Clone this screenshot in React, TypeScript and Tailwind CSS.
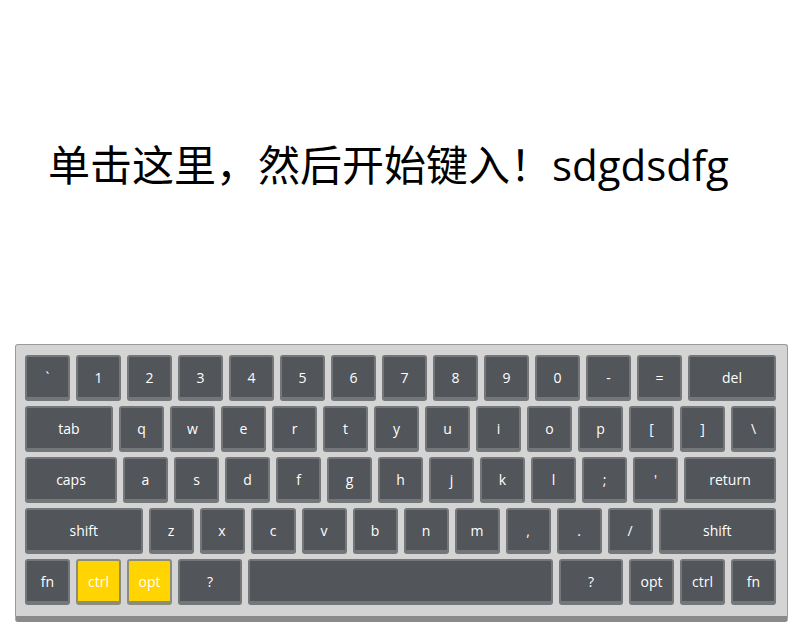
import React from "react";

type K = { l: string; w?: string; y?: boolean };

const rows: K[][] = [
  [
    { l: "`" }, { l: "1" }, { l: "2" }, { l: "3" }, { l: "4" }, { l: "5" }, { l: "6" },
    { l: "7" }, { l: "8" }, { l: "9" }, { l: "0" }, { l: "-" }, { l: "=" }, { l: "del", w: "flex-1" },
  ],
  [
    { l: "tab", w: "flex-1" }, { l: "q" }, { l: "w" }, { l: "e" }, { l: "r" }, { l: "t" }, { l: "y" },
    { l: "u" }, { l: "i" }, { l: "o" }, { l: "p" }, { l: "[" }, { l: "]" }, { l: "\\" },
  ],
  [
    { l: "caps", w: "flex-1" }, { l: "a" }, { l: "s" }, { l: "d" }, { l: "f" }, { l: "g" }, { l: "h" },
    { l: "j" }, { l: "k" }, { l: "l" }, { l: ";" }, { l: "'" }, { l: "return", w: "flex-1" },
  ],
  [
    { l: "shift", w: "flex-1" }, { l: "z" }, { l: "x" }, { l: "c" }, { l: "v" }, { l: "b" }, { l: "n" },
    { l: "m" }, { l: "," }, { l: "." }, { l: "/" }, { l: "shift", w: "flex-1" },
  ],
  [
    { l: "fn" }, { l: "ctrl", y: true }, { l: "opt", y: true }, { l: "?", w: "w-[64px]" },
    { l: "", w: "flex-1" }, { l: "?", w: "w-[64px]" }, { l: "opt" }, { l: "ctrl" }, { l: "fn" },
  ],
];

function Key({ k }: { k: K }) {
  const width = k.w ?? "w-[45px]";
  const face = k.y
    ? "bg-[#ffd400] border-[#8c8c7a]"
    : "bg-[#525559] border-[#74777a]";
  return (
    <div
      className={`${width} h-[46px] shrink-0 flex items-center justify-center rounded-[3px] border-2 border-b-[4px] ${face} text-white text-[14px]`}
    >
      {k.l}
    </div>
  );
}

export default function App() {
  return (
    <div
      className="w-[800px] h-[636px] bg-white overflow-hidden"
      style={{ fontFamily: '"Open Sans", "Noto Sans CJK SC", sans-serif' }}
    >
      <div className="h-[50px] mt-[140px] pl-[48px] flex items-center text-[42px] text-black leading-none whitespace-nowrap">
        单击这里，然后开始键入！sdgdsdfg
      </div>
      <div className="ml-[15px] mt-[154px] w-[773px] rounded-[3px] border border-[#9a9a9a] border-b-[6px] border-b-[#8a8a8a] bg-[#d4d4d4] pt-[10px] pl-[9px] pr-[11px] pb-[11px] flex flex-col gap-[5px]">
        {rows.map((r, i) => (
          <div key={i} className="flex gap-[6px]">
            {r.map((k, j) => (
              <Key key={j} k={k} />
            ))}
          </div>
        ))}
      </div>
    </div>
  );
}
